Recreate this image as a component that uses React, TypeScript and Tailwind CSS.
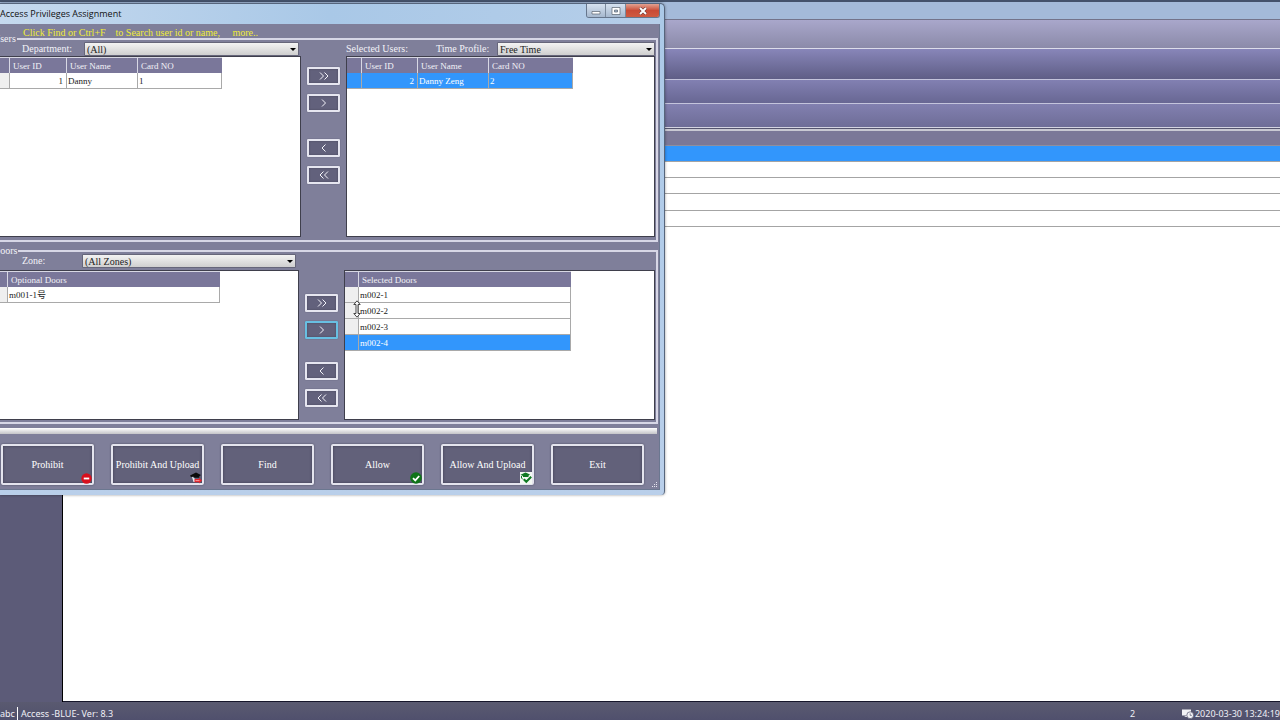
import type { ReactNode } from "react";

const serif = "font-['Liberation_Serif','Noto_Sans_CJK_SC',serif] text-[10px] leading-[10px]";

function Combo({ id, value, className }: { id: string; value: string; className: string }) {
  return (
    <span className={`relative flex h-[14px] ${className}`}>
      <select
        id={id}
        defaultValue={value}
        className="h-full w-full appearance-none rounded-[1px] border border-[#66667a] bg-linear-to-b from-[#f3f3f3] to-[#cfcfcf] px-[2px] py-0 text-[10px] leading-[11px] text-[#222]"
      >
        <option>{value}</option>
      </select>
      <svg viewBox="0 0 6 3" className="pointer-events-none absolute top-[6px] right-[3px] h-[3px] w-[6px]">
        <path d="M0 0h6L3 3z" fill="#000" />
      </svg>
    </span>
  );
}

function MoveButton({ label, path, focused }: { label: string; path: string; focused?: boolean }) {
  return (
    <button
      type="button"
      aria-label={label}
      className={`flex h-[18px] w-[33px] items-center justify-center rounded-[1px] border-2 bg-[#62617c] shadow-[inset_0_0_2px_#44445a,0_0_1px_#44445a] ${
        focused ? "border-[#68bfe2]" : "border-[#e6e6f0]"
      }`}
    >
      <svg viewBox="0 0 10 8" className="h-[8px] w-[10px]" fill="none" stroke="#f4f4fa" strokeWidth="1">
        <path d={path} />
      </svg>
    </button>
  );
}

const ALL_RIGHT = "M1 .5 4.5 4 1 7.5M5.5 .5 9 4 5.5 7.5";
const RIGHT = "M3 .5 6.5 4 3 7.5";
const LEFT = "M6.5 .5 3 4 6.5 7.5";
const ALL_LEFT = "M4.5 .5 1 4 4.5 7.5M9 .5 5.5 4 9 7.5";

function MoveColumn({ className, gap, focusRight }: { className: string; gap: string; focusRight?: boolean }) {
  return (
    <div className={`flex shrink-0 flex-col items-center gap-[9px] ${className}`}>
      <MoveButton label="Add all" path={ALL_RIGHT} />
      <MoveButton label="Add selected" path={RIGHT} focused={focusRight} />
      <div className={`flex flex-col gap-[9px] ${gap}`}>
        <MoveButton label="Remove selected" path={LEFT} />
        <MoveButton label="Remove all" path={ALL_LEFT} />
      </div>
    </div>
  );
}

type GridProps = {
  label: string;
  marker: string;
  columns: { title: string; width: string; right?: boolean }[];
  rows: string[][];
  width: string;
  selected?: number;
};

function Grid({ label, marker, columns, rows, width, selected }: GridProps) {
  return (
    <table aria-label={label} className={`table-fixed border-separate border-spacing-0 text-[9px] ${width}`}>
      <thead>
        <tr className="h-[16px] bg-[#7a779a] text-left text-[#f2f2f8]">
          <th aria-label="Row" className={`${marker} border-t border-[#d8d8e4] p-0`} />
          {columns.map((c) => (
            <th key={c.title} className={`${c.width} border-t border-l border-[#d8d8e4] py-0 pr-0 pl-[3px] font-normal`}>
              {c.title}
            </th>
          ))}
        </tr>
      </thead>
      <tbody>
        {rows.map((row, i) => (
          <tr key={i} className={`h-[16px] ${i === selected ? "bg-[#3296fc] text-white" : "bg-white text-[#222]"}`}>
            <td className={`border-b border-[#a9a9a9] p-0 ${i === selected ? "" : "bg-[#efefef]"}`} />
            {row.map((cell, j) => (
              <td
                key={j}
                className={`border-b border-l border-[#a9a9a9] px-[1px] py-0 last:border-r ${
                  columns[j].right ? "pr-[3px] text-right" : ""
                }`}
              >
                {cell}
              </td>
            ))}
          </tr>
        ))}
      </tbody>
    </table>
  );
}

function ActionButton({ children, icon }: { children: ReactNode; icon?: ReactNode }) {
  return (
    <button
      type="button"
      className="relative flex h-[41px] w-[93px] shrink-0 items-center justify-center rounded-[2px] border-2 border-[#e4e4ee] bg-[#62617a] whitespace-nowrap text-white shadow-[inset_0_0_3px_#3c3c50,0_0_2px_#44445a]"
    >
      {children}
      {icon && <span className="absolute right-0 -bottom-px">{icon}</span>}
    </button>
  );
}

const ProhibitIcon = (
  <svg viewBox="0 0 12 12" className="h-[11px] w-[11px]">
    <circle cx="6" cy="6" r="5.6" fill="#d80f1d" />
    <path d="M3 6h6" stroke="#fff" strokeWidth="2" />
  </svg>
);

const ProhibitUploadIcon = (
  <svg viewBox="0 0 12 12" className="h-[12px] w-[12px]">
    <path d="M2 5h2.5v2H9l-3 3H3.5z" fill="#e9e9ee" />
    <path d="M0 3.6 6 .5 11 3 9.3 4.3v1.5H3.5V4.6L1 5z" fill="#0b0b0b" />
    <path d="M4.5 7H9V5.8L12 8.6 9 11.4v-1.2H4.5z" fill="#e3232b" />
    <path d="M5.5 8.6h4" stroke="#ffb4b4" strokeWidth=".8" />
  </svg>
);

const AllowIcon = (
  <svg viewBox="0 0 12 12" className="h-[12px] w-[12px]">
    <circle cx="6" cy="6" r="5.8" fill="#0f7418" />
    <path d="M3 6.2 5.3 8.4 9.2 4" fill="none" stroke="#fff" strokeWidth="1.8" />
  </svg>
);

const AllowUploadIcon = (
  <svg viewBox="0 0 12 12" className="h-[12px] w-[12px]">
    <path d="M0 0h12v12H0z" fill="#f3f8f3" />
    <path d="M.5 2.8 5.5 .5 10 2.5 8.5 3.8V5H3V4z" fill="#0f7a22" />
    <path d="M1.5 4v2L3 7.5" fill="none" stroke="#0f7a22" />
    <path d="M3.8 7.2 6.3 9.8 11.2 4.8" fill="none" stroke="#0f7a22" strokeWidth="2" />
  </svg>
);

function WindowControls() {
  return (
    <div className="flex h-[14px] overflow-hidden rounded-b-[3px] border border-t-0 border-[#66768c]">
      <button type="button" aria-label="Minimize" className="flex w-[19px] items-center justify-center border-r border-[#7a899c] bg-linear-to-b from-[#d6e2f0] to-[#a6b8ce]">
        <svg viewBox="0 0 10 8" className="h-[8px] w-[10px]">
          <path d="M1 4.5h8v2.5H1z" fill="#fff" stroke="#59636f" strokeWidth=".7" />
        </svg>
      </button>
      <button type="button" aria-label="Maximize" className="flex w-[20px] items-center justify-center border-r border-[#7a899c] bg-linear-to-b from-[#d6e2f0] to-[#a6b8ce]">
        <svg viewBox="0 0 10 8" className="h-[8px] w-[10px]">
          <path d="M1 .5h8v7H1z" fill="#fff" stroke="#59636f" strokeWidth=".7" />
          <path d="M3.5 3h3v2h-3z" fill="#a6b8ce" stroke="#59636f" strokeWidth=".7" />
        </svg>
      </button>
      <button type="button" aria-label="Close" className="flex w-[33px] items-center justify-center bg-linear-to-b from-[#e2a191] via-[#c94b36] to-[#cf5a40]">
        <svg viewBox="0 0 10 8" className="h-[8px] w-[10px]" fill="none">
          <path d="M2 1 8 7M8 1 2 7" stroke="#5a3030" strokeWidth="3" />
          <path d="M2 1 8 7M8 1 2 7" stroke="#fff" strokeWidth="2" />
        </svg>
      </button>
    </div>
  );
}

const listBox = "overflow-hidden border border-[#3f3f4c] bg-white";

function Dialog() {
  return (
    <section
      role="dialog"
      aria-labelledby="dialog-title"
      className="absolute top-[3px] left-0 w-[665px] overflow-hidden rounded-tr-[5px] rounded-br-[4px] border-t border-r border-[#56657c] bg-linear-to-b from-[#abc9e8] to-[#b9cfea] pr-[4px] pb-[5px] shadow-[0_0_3px_#0006]"
    >
      <header className="flex h-[20px] items-start justify-between bg-linear-to-r from-[#c5d9ee] via-[#a9c8e7] to-[#b5cee9]">
        <h1 id="dialog-title" className="font-['Open_Sans','Noto_Sans',sans-serif] text-[9px] leading-[19px] text-[#111]">
          Access Privileges Assignment
        </h1>
        <WindowControls />
      </header>
      <div className={`relative h-[466px] border-r border-b border-[#6b7790] bg-[#7f7f9a] pt-1 ${serif}`}>
        <p className="pl-[23px] whitespace-pre text-[#efec35]">{"Click Find or Ctrl+F    to Search user id or name,     more.."}</p>

        <fieldset className="-mt-[3px] mr-[1px] h-[207px] min-w-0 border-2 border-l-0 border-[#d7d7e6] pr-[1px]">
          <legend className="-ml-[7px] pr-[1px] leading-[8px] text-[#f2f2f8]">Users</legend>
          <div className="-mt-px flex">
            <div className="w-[301px] shrink-0">
              <div className="flex items-center pl-[22px] text-[#f2f2f8]">
                <label htmlFor="department" className="w-[62px]">Department:</label>
                <Combo id="department" value="(All)" className="w-[215px]" />
              </div>
              <div className={`h-[181px] border-l-0 ${listBox}`}>
                <Grid
                  label="Users"
                  marker="w-[9px]"
                  width="w-[222px]"
                  columns={[
                    { title: "User ID", width: "w-[57px]", right: true },
                    { title: "User Name", width: "w-[71px]" },
                    { title: "Card NO", width: "w-[85px]" },
                  ]}
                  rows={[["1", "Danny", "1"]]}
                />
              </div>
            </div>
            <MoveColumn className="w-[45px] pt-[25px]" gap="mt-[18px]" />
            <div className="min-w-0 flex-1">
              <div className="flex items-center text-[#f2f2f8]">
                <span className="w-[90px]">Selected Users:</span>
                <label htmlFor="time-profile" className="w-[61px]">Time Profile:</label>
                <Combo id="time-profile" value="Free Time" className="flex-1" />
              </div>
              <div className={`h-[181px] ${listBox}`}>
                <Grid
                  label="Selected users"
                  marker="w-[14px]"
                  width="w-[226px]"
                  columns={[
                    { title: "User ID", width: "w-[56px]", right: true },
                    { title: "User Name", width: "w-[71px]" },
                    { title: "Card NO", width: "w-[85px]" },
                  ]}
                  rows={[["2", "Danny Zeng", "2"]]}
                  selected={0}
                />
              </div>
            </div>
          </div>
        </fieldset>

        <fieldset className="mt-[5px] mr-[1px] h-[177px] min-w-0 border-2 border-l-0 border-[#d7d7e6] pr-[1px]">
          <legend className="-ml-[7px] pr-[1px] leading-[8px] text-[#f2f2f8]">Doors</legend>
          <div className="-mt-px flex">
            <div className="w-[299px] shrink-0">
              <div className="flex items-center pl-[22px] text-[#f2f2f8]">
                <label htmlFor="zone" className="w-[60px]">Zone:</label>
                <Combo id="zone" value="(All Zones)" className="w-[214px]" />
              </div>
              <div className={`mt-[2px] h-[150px] border-l-0 ${listBox}`}>
                <Grid
                  label="Optional doors"
                  marker="w-[7px]"
                  width="w-[220px]"
                  columns={[{ title: "Optional Doors", width: "w-[213px]" }]}
                  rows={[["m001-1号"]]}
                />
              </div>
            </div>
            <MoveColumn className="w-[45px] pt-[40px]" gap="mt-[14px]" focusRight />
            <div className={`mt-[16px] h-[150px] min-w-0 flex-1 ${listBox}`}>
              <Grid
                label="Selected doors"
                marker="w-[13px]"
                width="w-[226px]"
                columns={[{ title: "Selected Doors", width: "w-[213px]" }]}
                rows={[["m002-1"], ["m002-2"], ["m002-3"], ["m002-4"]]}
                selected={3}
              />
            </div>
          </div>
        </fieldset>

        <div className="mt-1 mr-[2px] h-[6px] bg-linear-to-b from-white to-[#c4c4c8]" />

        <div className="mt-[10px] flex gap-[17px] pl-[1px]">
          <ActionButton icon={ProhibitIcon}>Prohibit</ActionButton>
          <ActionButton icon={ProhibitUploadIcon}>Prohibit And Upload</ActionButton>
          <ActionButton>Find</ActionButton>
          <ActionButton icon={AllowIcon}>Allow</ActionButton>
          <ActionButton icon={AllowUploadIcon}>Allow And Upload</ActionButton>
          <ActionButton>Exit</ActionButton>
        </div>

        <svg viewBox="0 0 6 6" className="absolute right-[1px] bottom-[1px] h-[6px] w-[6px]" fill="#e6e6f0">
          <path d="M4 0h1v1H4zM2 2h1v1H2zM4 2h1v1H4zM0 4h1v1H0zM2 4h1v1H2zM4 4h1v1H4z" />
        </svg>
        <svg viewBox="0 0 8 18" className="absolute top-[276px] left-[353px] h-[18px] w-[8px]">
          <path d="M4 .8 7.2 4.5H5v9h2.2L4 17.2.8 13.5H3v-9H.8z" fill="#fff" stroke="#333" strokeWidth=".9" />
        </svg>
      </div>
    </section>
  );
}

function MainWindow() {
  return (
    <>
      <div className="h-[19px] border-t-2 border-[#44526b] bg-[#a4bad9]" />
      <div className="h-[30px] border-t border-b border-t-[#73738a] border-b-[#dcdcea] bg-linear-to-b from-[#a9a7cb] to-[#8b8aa9]" />
      <div className="h-[31px] border-b border-[#c4c4dc] bg-linear-to-b from-[#8886b9] to-[#5f5e86]" />
      <div className="h-[24px] border-b border-[#c4c4dc] bg-linear-to-b from-[#8280b2] to-[#686793]" />
      <div className="h-[24px] border-b border-[#d4d4e2] bg-linear-to-b from-[#8280b0] to-[#6e6d97]" />
      <div className="h-[3px] border-t border-[#55556e] bg-[#c9c9d3]" />
      <div className="h-[15px] border-b border-[#8f8f9f] bg-[#7b7898]" />
      <div className="flex min-h-0 flex-1">
        <aside className="w-[63px] border-r border-black bg-[#5c5b78]" />
        <main className="flex-1 border-b border-[#15152a] bg-white">
          <div className="h-4 border-b border-[#a4a4a4] bg-[#3296fc]" />
          <div className="h-4 border-b border-[#a4a4a4]" />
          <div className="h-4 border-b border-[#a4a4a4]" />
          <div className="h-[17px] border-b border-[#a4a4a4]" />
          <div className="h-4 border-b border-[#a4a4a4]" />
        </main>
      </div>
    </>
  );
}

export default function App() {
  return (
    <div className="relative flex h-screen flex-col overflow-hidden font-['Noto_Sans',sans-serif]">
      <MainWindow />
      <footer className="flex h-[18px] items-center bg-linear-to-b from-[#5a5a70] to-[#50506d] pt-[5px] text-[9px] leading-[13px] whitespace-nowrap text-[#f0f0f6]">
        <span className="w-[18px] border-r border-white">abc</span>
        <span className="flex-1 pl-[3px]">Access -BLUE- Ver: 8.3</span>
        <span className="w-[52px]">2</span>
        <svg viewBox="0 0 12 10" className="mr-[1px] h-[10px] w-[12px]">
          <path d="M0 .5h9v6H0zM2 8h3V6.5z" fill="#f2f2f6" />
          <circle cx="8.2" cy="6.2" r="3.4" fill="#f2f2f6" stroke="#54546e" strokeWidth=".7" />
          <path d="M8.2 4.4v2h1.6" fill="none" stroke="#54546e" strokeWidth=".7" />
        </svg>
        <time dateTime="2020-03-30T13:24:19">2020-03-30 13:24:19</time>
      </footer>
      <Dialog />
    </div>
  );
}
